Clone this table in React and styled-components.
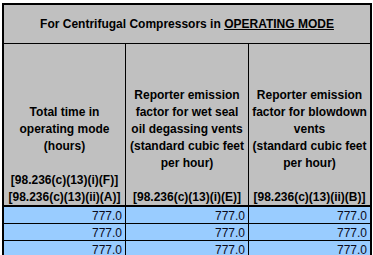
import styled, { createGlobalStyle } from "styled-components";

const GlobalStyle = createGlobalStyle`
    html, body {
        margin: 0;
        padding: 0;
        overflow: hidden;
        background: #ffffff;
    }
`

const Sheet = styled.div`
    margin: 3px 0 0 2px;
    width: 366px;
    border-left: 2px solid #000;
    border-right: 2px solid #000;
    border-top: 2px solid #000;
    font-family: "Liberation Sans", Arial, sans-serif;
    color: #000;
`

const Title = styled.div`
    height: 38px;
    display: flex;
    align-items: center;
    justify-content: center;
    background: #c0c0c0;
    border-bottom: 1px solid #000;
    font-size: 12px;
    font-weight: bold;
    white-space: nowrap;
`

const Underline = styled.span`
    text-decoration: underline;
`

const Row = styled.div`
    display: grid;
    grid-template-columns: 122px 123px 121px;
    grid-template-rows: ${props => props.$height}px;
    border-bottom: ${props => props.$thick ? 2 : 1}px solid #000;
`

const HeadCell = styled.div`
    display: flex;
    flex-direction: column;
    justify-content: flex-end;
    align-items: center;
    background: #c0c0c0;
    border-right: 1px solid #000;
    font-size: 12px;
    font-weight: bold;
    &:last-child {
        border-right: 0;
    }
`

const Line = styled.div`
    white-space: nowrap;
    height: 17px;
    line-height: 19px;
`

const DataCell = styled.div`
    box-sizing: border-box;
    height: 16px;
    padding: 1px 3px 0 0;
    background: #99ccff;
    border-right: 1px solid #000;
    font-size: 12px;
    line-height: 16px;
    color: #0a0a1a;
    text-align: right;
    &:last-child {
        border-right: 0;
    }
`

const headers = [
    ["Total time in", "operating mode", "(hours)", "", "[98.236(c)(13)(i)(F)]", "[98.236(c)(13)(ii)(A)]"],
    ["Reporter emission", "factor for wet seal", "oil degassing vents", "(standard cubic feet", "per hour)", "", "[98.236(c)(13)(i)(E)]"],
    ["Reporter emission", "factor for blowdown", "vents", "(standard cubic feet", "per hour)", "", "[98.236(c)(13)(ii)(B)]"],
]

const rows = [
    ["777.0", "777.0", "777.0"],
    ["777.0", "777.0", "777.0"],
    ["777.0", "777.0", "777.0"],
]

const App = () => {
    return (
        <>
            <GlobalStyle/>
            <Sheet>
                <Title>For Centrifugal Compressors in&nbsp;<Underline>OPERATING MODE</Underline></Title>
                <Row $height={161} $thick>
                    {headers.map((lines, i) => (
                        <HeadCell key={i}>
                            {lines.map((l, j) => <Line key={j}>{l}</Line>)}
                        </HeadCell>
                    ))}
                </Row>
                {rows.map((r, i) => (
                    <Row key={i} $height={16}>
                        {r.map((v, j) => <DataCell key={j}>{v}</DataCell>)}
                    </Row>
                ))}
            </Sheet>
        </>
    )
}

export default App
